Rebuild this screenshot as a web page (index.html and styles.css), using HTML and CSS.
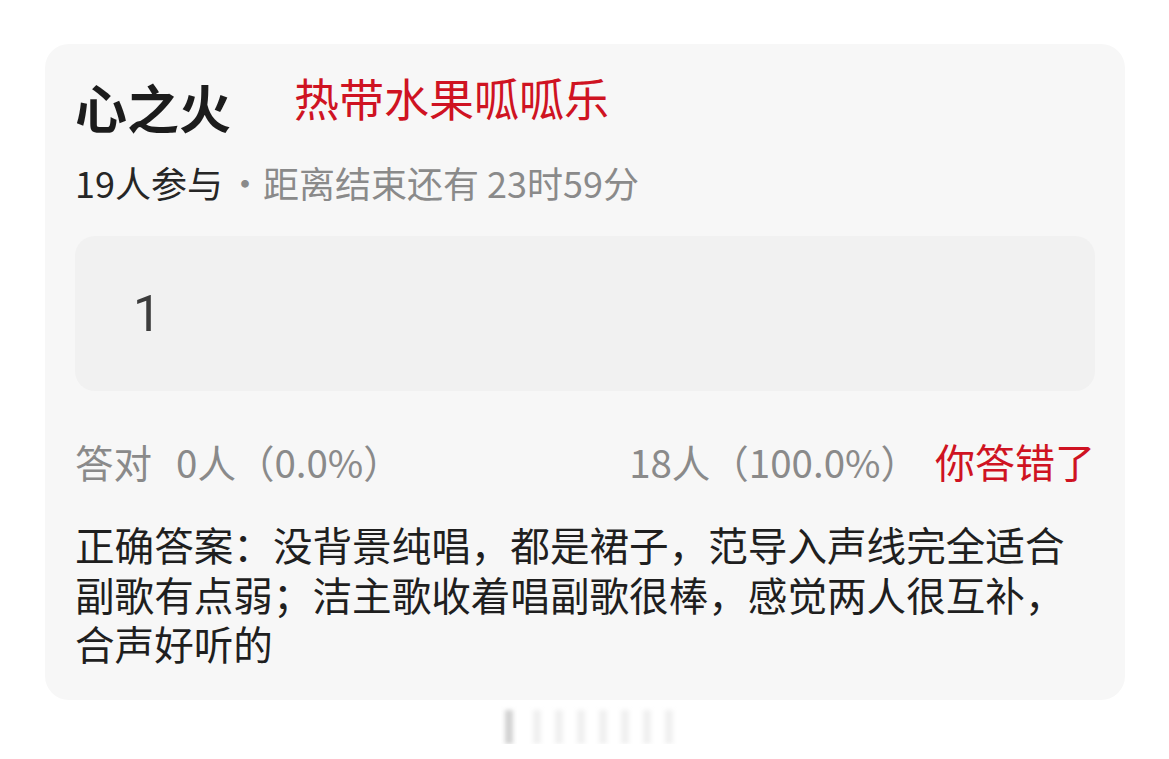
FILE: index.html
```html
<!DOCTYPE html>
<html lang="zh-CN">
<head>
  <meta charset="UTF-8">
  <meta name="viewport" content="width=device-width, initial-scale=1.0">
  <title>心之火</title>
  <link rel="stylesheet" href="styles.css">
</head>
<body>
  <div class="card">
    <div class="title-row">
      <h1 class="title">心之火</h1>
      <span class="note">热带水果呱呱乐</span>
    </div>
    <div class="meta">
      <span class="count">19人参与</span><span class="dot">·</span>距离结束还有 23时59分
    </div>

    <div class="answer-box">1</div>

    <div class="stats">
      <div class="stat-left"><span class="label">答对</span>0人（0.0%）</div>
      <div class="stat-right">18人（100.0%）<span class="wrong">你答错了</span></div>
    </div>

    <p class="solution">正确答案：没背景纯唱，都是裙子，范导入声线完全适合<br>副歌有点弱；洁主歌收着唱副歌很棒，感觉两人很互补，<br>合声好听的</p>
  </div>

  <!-- 底部滚动条残影 -->
  <div class="ghost">
    <i class="bar dark"></i><i class="bar"></i><i class="bar"></i><i class="bar"></i><i class="bar"></i><i class="bar"></i><i class="bar"></i><i class="bar"></i>
  </div>
</body>
</html>
```

FILE: styles.css
```css
html, body {
  margin: 0;
  padding: 0;
  background: #fff;
  font-family: "Noto Sans CJK SC", "Noto Sans", sans-serif;
  overflow: hidden;
}

/* 卡片 */
.card {
  width: 1080px;
  margin: 44px 0 0 45px;
  padding: 32px 30px 32px;
  box-sizing: border-box;
  background: #f7f7f7;
  border-radius: 24px;
}

.title-row {
  display: flex;
  align-items: flex-start;
  height: 62px;
}

.title {
  margin: 0;
  font-size: 52px;
  line-height: 62px;
  font-weight: 700;
  color: #1c1c1c;
}

/* 红色标注 */
.note {
  margin: -3px 0 0 63px;
  font-size: 45px;
  line-height: 50px;
  color: #cf1322;
}

.meta {
  margin-top: 22px;
  font-size: 36px;
  line-height: 44px;
  color: #8a8a8a;
}
.meta .count { color: #262626; }
.meta .dot { margin: 0 0 0 4px; letter-spacing: 0; }

/* 答案框 */
.answer-box {
  margin-top: 32px;
  height: 155px;
  display: flex;
  align-items: center;
  padding-left: 58px;
  background: #f1f1f1;
  border-radius: 20px;
  font-family: Roboto, "Noto Sans", sans-serif;
  font-size: 50px;
  color: #3c3c3c;
}

.stats {
  margin-top: 48px;
  display: flex;
  justify-content: space-between;
  align-items: baseline;
  font-size: 38.5px;
  line-height: 44px;
  color: #8a8a8a;
}
.stats .label { margin-right: 24px; }
.stats .wrong { margin-left: 16px; font-size: 40px; color: #cf1322; }

.solution {
  margin: 36px 0 0;
  font-size: 39.6px;
  line-height: 49.5px;
  color: #1f1f1f;
  white-space: nowrap;
}

/* 底部淡影 */
.ghost {
  display: flex;
  gap: 14px;
  margin: 10px 0 0 505px;
  height: 34px;
  filter: blur(2px);
}
.ghost .bar {
  width: 8px;
  background: #f0f0f0;
}
.ghost .bar.dark {
  background: #d2d2d2;
  margin-right: 6px;
}
```
